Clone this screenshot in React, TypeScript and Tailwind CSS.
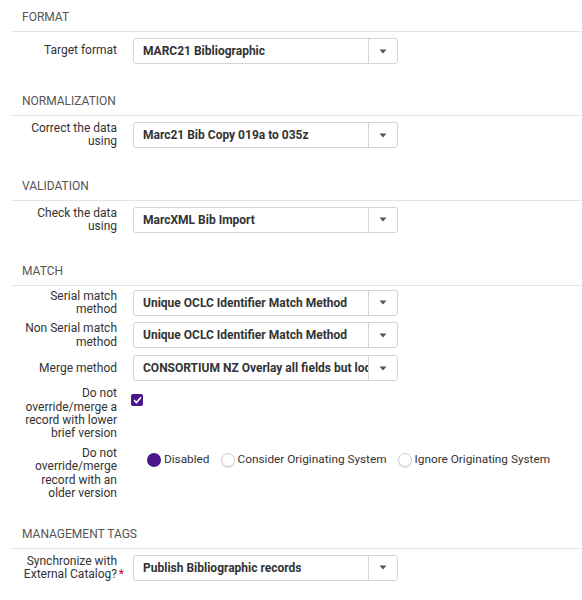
import React from 'react';

const Caret = () => (
  <svg width="8" height="5" viewBox="0 0 8 5" className="block">
    <path d="M0.5 0.5 H7.5 L4 4.5 Z" fill="#555" />
  </svg>
);

const Select = ({ value }: { value: string }) => (
  <div className="flex h-[26px] w-[265px] items-stretch rounded-[3px] border border-[#d5d5d5] bg-white">
    <div className="flex min-w-0 flex-1 items-center overflow-hidden whitespace-nowrap pl-[9px] text-[12px] font-bold text-[#333]">
      {value}
    </div>
    <div className="flex w-[29px] items-center justify-center border-l border-[#d5d5d5]">
      <Caret />
    </div>
  </div>
);

const Section = ({ title, children }: { title: string; children: React.ReactNode }) => (
  <div>
    <div className="ml-[12px] flex h-[32px] items-center border-b border-[#e4e4e4] pl-[10px] pt-[3px] text-[12px] uppercase text-[#555]">
      {title}
    </div>
    <div className="flex flex-col gap-y-[6px] pt-[6px]">{children}</div>
  </div>
);

const Row = ({ label, children }: { label: React.ReactNode; children: React.ReactNode }) => (
  <div className="flex items-start">
    <div className="ml-[20px] flex min-h-[26px] w-[97px] items-center justify-end text-right text-[12px] leading-[13.4px] text-[#333]">
      <span>{label}</span>
    </div>
    <div className="ml-[16px] flex h-[26px] items-center">{children}</div>
  </div>
);

const Radio = ({ checked, label }: { checked?: boolean; label: string }) => (
  <label className="flex items-center gap-[3px] text-[11.8px] text-[#333]">
    {checked ? (
      <span className="block h-[14px] w-[14px] rounded-full bg-[#4a168c]" />
    ) : (
      <span className="block h-[14px] w-[14px] rounded-full border border-[#d0d0d0] bg-white shadow-[0_1px_1px_rgba(0,0,0,0.12)]" />
    )}
    <span>{label}</span>
  </label>
);

export default function App() {
  return (
    <div className="min-h-[600px] w-[582px] bg-white" style={{ fontFamily: 'Roboto, "Liberation Sans", sans-serif' }}>
      <div className="flex flex-col gap-y-[20px]">
        <Section title="Format">
          <Row label="Target format">
            <Select value="MARC21 Bibliographic" />
          </Row>
        </Section>
        <Section title="Normalization">
          <Row label="Correct the data using">
            <Select value="Marc21 Bib Copy 019a to 035z" />
          </Row>
        </Section>
        <Section title="Validation">
          <Row label="Check the data using">
            <Select value="MarcXML Bib Import" />
          </Row>
        </Section>
        <Section title="Match">
          <div className="-mt-[2px]">
            <Row label="Serial match method">
              <Select value="Unique OCLC Identifier Match Method" />
            </Row>
          </div>
          <Row label="Non Serial match method">
            <Select value="Unique OCLC Identifier Match Method" />
          </Row>
          <Row label="Merge method">
            <Select value="CONSORTIUM NZ Overlay all fields but local" />
          </Row>
          <Row label="Do not override/merge a record with lower brief version">
            <span className="-ml-[2px] flex h-[12px] w-[12px] items-center justify-center rounded-[2px] bg-[#4a168c]">
              <svg width="9" height="8" viewBox="0 0 9 8">
                <path d="M1 4.2 L3.4 6.5 L8 1.3" fill="none" stroke="#fff" strokeWidth="1.6" />
              </svg>
            </span>
          </Row>
          <Row label="Do not override/merge record with an older version">
            <div className="ml-[14px] flex items-center gap-[11px]">
              <Radio checked label="Disabled" />
              <Radio label="Consider Originating System" />
              <Radio label="Ignore Originating System" />
            </div>
          </Row>
        </Section>
        <div className="-mt-[4px]">
          <Section title="Management Tags">
            <Row
              label={
                <span className="relative whitespace-nowrap">
                  Synchronize with
                  <br />
                  External Catalog?
                  <span className="absolute -right-[7px] bottom-0 text-[#d0021b]">*</span>
                </span>
              }
            >
              <Select value="Publish Bibliographic records" />
            </Row>
          </Section>
        </div>
      </div>
    </div>
  );
}
